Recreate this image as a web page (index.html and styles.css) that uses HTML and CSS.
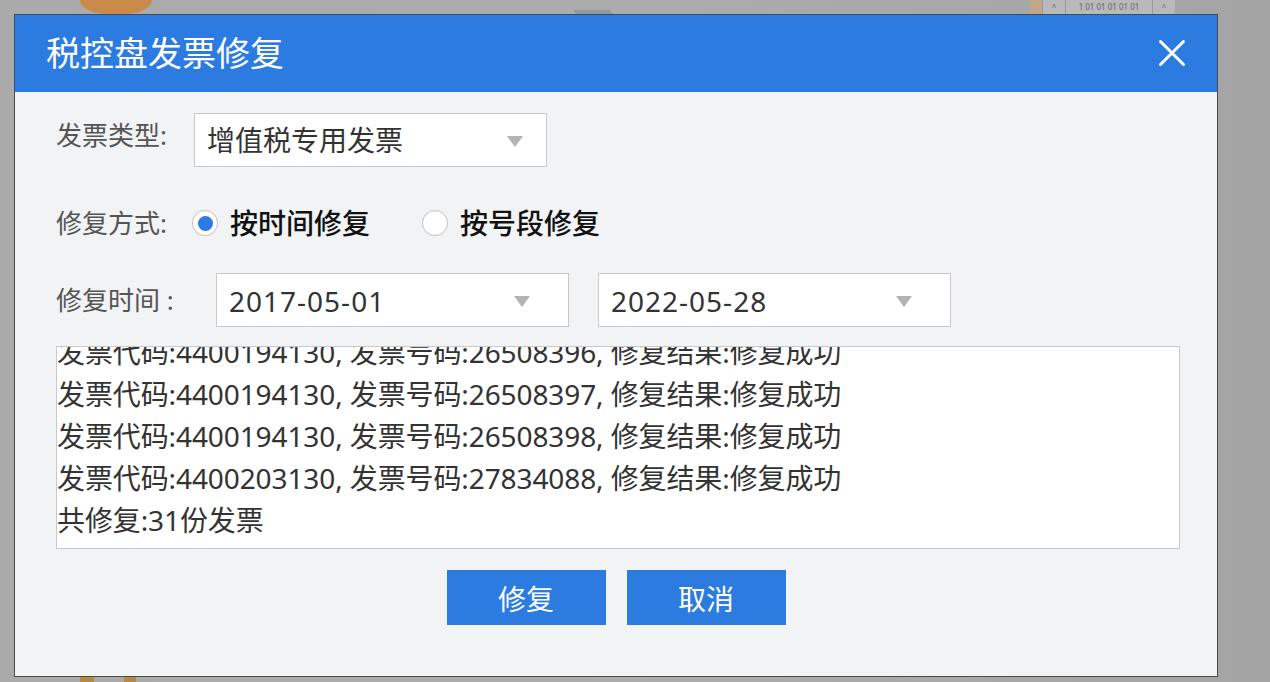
FILE: index.html
```html
<!DOCTYPE html>
<html lang="zh-CN">
<head>
<meta charset="utf-8">
<title>税控盘发票修复</title>
<link rel="stylesheet" href="styles.css">
</head>
<body>
<div class="screen">
  <div class="deco deco-orange"></div>
  <div class="deco deco-tool"></div>
  <div class="deco deco-table"><span class="cell cell-a">^</span><span class="cell cell-b">1 01 01 01 01 01</span><span class="cell cell-a">^</span></div>
  <div class="deco deco-foot1"></div>
  <div class="deco deco-foot2"></div>

  <div class="dialog">
    <div class="dlg-header">
      <div class="dlg-title">税控盘发票修复</div>
      <svg class="close" width="28" height="28" viewBox="0 0 28 28">
        <path d="M2.5 2.5 L25.5 25.5 M25.5 2.5 L2.5 25.5" stroke="#fff" stroke-width="3" stroke-linecap="round" fill="none"/>
      </svg>
    </div>
    <div class="dlg-body">
      <div class="row row-type">
        <div class="label label-type">发票类型:</div>
        <div class="select">
          <span class="select-text">增值税专用发票</span>
          <span class="arrow"></span>
        </div>
      </div>

      <div class="row row-mode">
        <div class="label label-mode">修复方式:</div>
        <div class="radio checked"><span class="dot"></span></div>
        <span class="radio-text">按时间修复</span>
        <div class="radio radio-second"></div>
        <span class="radio-text">按号段修复</span>
      </div>

      <div class="row row-time">
        <div class="label label-time">修复时间 :</div>
        <div class="select date">
          <span class="select-text">2017-05-01</span>
          <span class="arrow"></span>
        </div>
        <div class="select date date-second">
          <span class="select-text">2022-05-28</span>
          <span class="arrow"></span>
        </div>
      </div>

      <div class="log">
        <div class="log-inner">
          <div class="log-line">发票代码:4400194130, 发票号码:26508396, 修复结果:修复成功</div>
          <div class="log-line">发票代码:4400194130, 发票号码:26508397, 修复结果:修复成功</div>
          <div class="log-line">发票代码:4400194130, 发票号码:26508398, 修复结果:修复成功</div>
          <div class="log-line">发票代码:4400203130, 发票号码:27834088, 修复结果:修复成功</div>
          <div class="log-line">共修复:31份发票</div>
        </div>
      </div>

      <div class="buttons">
        <div class="btn">修复</div>
        <div class="btn">取消</div>
      </div>
    </div>
  </div>
</div>
</body>
</html>
```
FILE: styles.css
```css
html, body {
  margin: 0;
  padding: 0;
}
body {
  width: 1270px;
  height: 682px;
  overflow: hidden;
  background: #a8a8a8;
  font-family: "Noto Sans", "Noto Sans CJK SC", sans-serif;
}
.screen {
  position: relative;
  width: 1270px;
  height: 682px;
  padding: 14px 0 0 14px;
  box-sizing: border-box;
  background: linear-gradient(90deg, #aaaaaa 0%, #acacac 50%, #a4a4a4 100%);
}

/* dimmed background application fragments */
.deco { position: absolute; }
.deco-orange {
  left: 80px; top: -20px; width: 72px; height: 34px;
  border-radius: 40%;
  background: #c98a4a;
}
.deco-tool {
  left: 572px; top: 0; width: 36px; height: 10px;
  border-bottom: 4px solid #8d9a9e;
  transform: skewX(30deg);
}
.deco-table {
  left: 1030px; top: 0; height: 14px;
  display: flex;
  background: #bfa88a;
  padding-left: 12px;
}
.cell {
  display: block;
  height: 14px;
  background: #b9b9b9;
  border-left: 1px solid #9a9a9a;
  color: #666;
  font-size: 8px;
  line-height: 14px;
  text-align: center;
}
.cell-a { width: 22px; }
.cell-b { width: 86px; }
.deco-foot1 {
  left: 80px; top: 677px; width: 14px; height: 5px; background: #b48a4a;
}
.deco-foot2 {
  left: 124px; top: 677px; width: 12px; height: 5px; background: #b48a4a;
}

/* dialog */
.dialog {
  position: relative;
  width: 1204px;
  height: 663px;
  box-sizing: border-box;
  border: 1px solid #4a4a4a;
  background: #f2f3f4;
}
.dlg-header {
  height: 77px;
  background: #2c7be0;
  display: flex;
  align-items: center;
  justify-content: space-between;
  padding: 0 31px 0 31px;
}
.dlg-title {
  color: #fff;
  font-size: 34px;
  line-height: 40px;
  margin-top: -1px;
}
.close { display: block; margin-top: -2px; }

.dlg-body {
  padding: 21px 0 0 41px;
}
.row {
  display: flex;
  align-items: center;
}
.label {
  font-size: 26px;
  color: #555;
  line-height: 30px;
  white-space: nowrap;
  flex: none;
}
.label-type { width: 138px; padding-bottom: 10px; }
.label-mode { width: 136px; }
.label-time { width: 160px; }

.select {
  width: 353px;
  height: 54px;
  box-sizing: border-box;
  border: 1px solid #c9c9c9;
  background: #fff;
  display: flex;
  align-items: center;
  justify-content: space-between;
  padding: 0 23px 0 12px;
}
.select-text {
  font-size: 28px;
  color: #333;
  line-height: 34px;
}
.arrow {
  width: 0; height: 0;
  border-left: 8px solid transparent;
  border-right: 8px solid transparent;
  border-top: 11px solid #b3b3b3;
  margin-top: 2px;
}
.date { padding-right: 38px; }
.date .select-text { margin-top: 1px; letter-spacing: 1px; }
.date-second { margin-left: 29px; }

.row-mode {
  margin-top: 41px;
  height: 30px;
}
.radio {
  width: 26px;
  height: 26px;
  box-sizing: border-box;
  border: 1px solid #c6c6c6;
  border-radius: 50%;
  background: #fff;
  display: flex;
  align-items: center;
  justify-content: center;
  flex: none;
  box-shadow: 0 0 1px rgba(0,0,0,0.08);
}
.dot {
  width: 15px;
  height: 15px;
  border-radius: 50%;
  background: #2c7be0;
}
.radio-text {
  font-size: 28px;
  color: #111;
  font-weight: 500;
  margin-left: 12px;
  line-height: 30px;
}
.radio-second { margin-left: 52px; }

.row-time { margin-top: 35px; }

.log {
  margin-top: 19px;
  width: 1124px;
  height: 203px;
  box-sizing: border-box;
  border: 1px solid #c9c9c9;
  background: #fff;
  overflow: hidden;
}
.log-inner {
  margin-top: -16px;
  padding-left: 0;
}
.log-line {
  font-size: 28px;
  line-height: 42px;
  color: #333;
  white-space: nowrap;
  letter-spacing: -0.1px;
}

.buttons {
  display: flex;
  justify-content: center;
  gap: 21px;
  margin-top: 21px;
  padding-right: 41px;
}
.btn {
  width: 159px;
  height: 55px;
  background: #2c7be0;
  color: #fff;
  font-size: 28px;
  display: flex;
  align-items: center;
  justify-content: center;
}
```
